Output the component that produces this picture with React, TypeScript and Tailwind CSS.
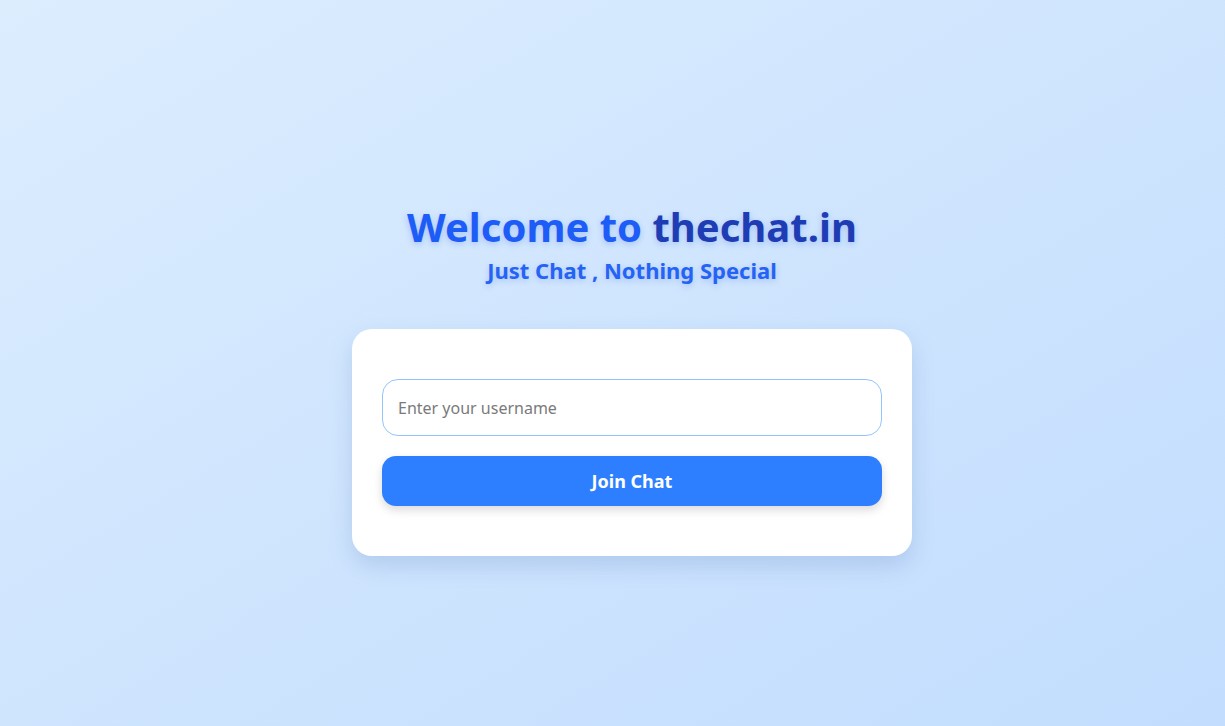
import { useState } from 'react';

const App = () => {
  const [name, setName] = useState('');

  return (
    <div
      className="min-h-screen w-full flex flex-col items-center justify-center pl-[39px] pt-[33px] bg-gradient-to-br from-[#dcedfe] to-[#c2ddfe]"
      style={{ fontFamily: '"Noto Sans", sans-serif' }}
    >
      <div className="flex flex-col items-center">
        <h1 className="text-[40px] leading-[48px] font-bold text-[#1d5cf6] [text-shadow:0_2px_6px_rgba(29,78,216,0.25)]">
          Welcome to <span className="text-[#1e3db5]">thechat.in</span>
        </h1>
        <p className="mt-[4px] text-[22px] leading-[30px] font-bold text-[#2563f5] [text-shadow:0_2px_6px_rgba(29,78,216,0.25)]">
          Just Chat , Nothing Special
        </p>
      </div>

      <div className="mt-[44px] w-[560px] bg-white rounded-[20px] px-[30px] py-[50px] shadow-[0_10px_22px_rgba(80,120,180,0.22)] flex flex-col gap-[20px]">
        <input
          value={name}
          onChange={(e) => setName(e.target.value)}
          placeholder="Enter your username"
          className="h-[57px] w-full rounded-[16px] border border-[#93c5fd] px-[15px] text-[16px] text-gray-800 placeholder:text-[#7a7a7a] outline-none"
        />
        <button className="h-[50px] w-full rounded-[14px] bg-[#2d7fff] text-white text-[18px] font-bold shadow-[0_4px_10px_rgba(0,0,0,0.15)]">
          Join Chat
        </button>
      </div>
    </div>
  );
};

export default App;
